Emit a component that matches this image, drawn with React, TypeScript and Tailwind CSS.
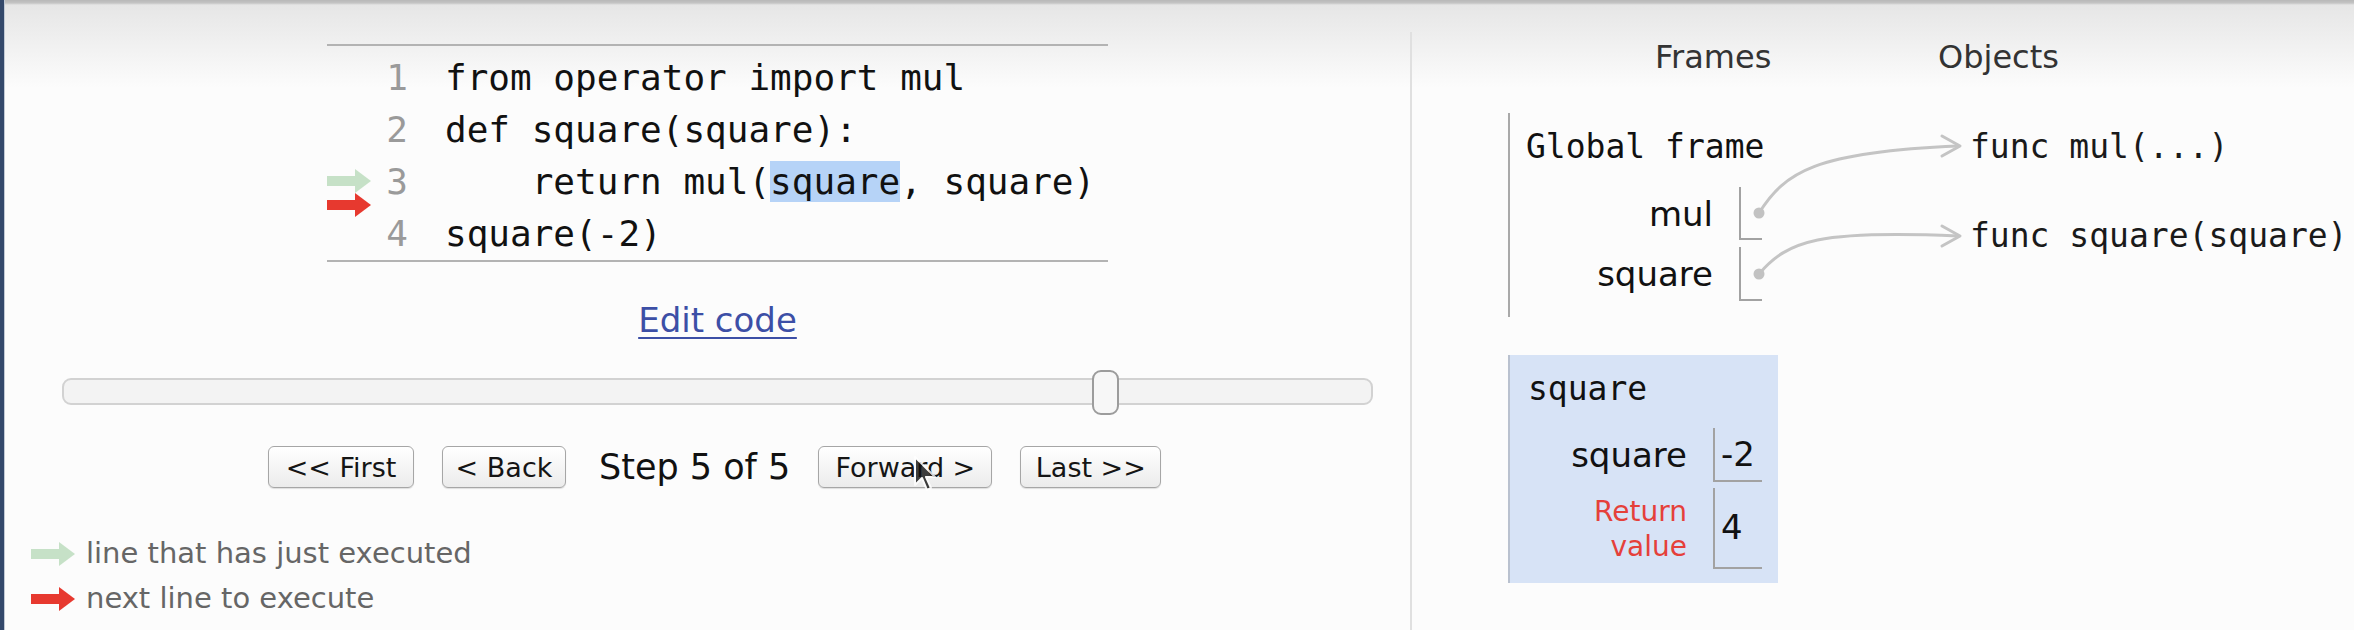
import React from "react";

// Python Tutor style visualizer, step 5 of 5

function Arrow({ color }: { color: string }) {
  return (
    <svg width="44" height="26" viewBox="0 0 44 26" className="block shrink-0">
      <rect x="0" y="8" width="29" height="10" fill={color} />
      <polygon points="28,1 44,13 28,25" fill={color} />
    </svg>
  );
}

const lines = [
  { n: 1, code: <>from operator import mul</> },
  { n: 2, code: <>def square(square):</> },
  {
    n: 3,
    code: (
      <>
        {"    return mul("}
        <span className="bg-[#b6d3f7]">square</span>
        {", square)"}
      </>
    ),
  },
  { n: 4, code: <>square(-2)</> },
];

function Btn({ label, w }: { label: string; w: string }) {
  return (
    <button
      className={`${w} h-[42px] rounded-[6px] border border-[#a6a6a6] bg-[linear-gradient(to_bottom,#ffffff,#ebebeb)] shadow-[0_1px_1px_rgba(0,0,0,0.12)] text-[27px] leading-none text-[#151515] font-['DejaVu_Sans',sans-serif]`}
    >
      {label}
    </button>
  );
}

function Row({ label, h, lw, children }: { label: React.ReactNode; h: string; lw: string; children?: React.ReactNode }) {
  return (
    <div className="flex items-center">
      <div className={`${lw} text-right text-[34px] leading-[40px] text-[#111] font-['DejaVu_Sans',sans-serif]`}>{label}</div>
      <div className={`ml-[26px] ${h} border-l-2 border-b-2 border-[#a2a2a2] flex items-center`}>{children}</div>
    </div>
  );
}

export default function App() {
  return (
    <div className="relative w-[2354px] h-[630px] overflow-hidden flex bg-[linear-gradient(to_bottom,#b8b8b8_0px,#c4c4c4_3px,#e6e6e6_5px,#fcfcfc_88px)]">
      {/* window edge */}
      <div className="w-[5px] shrink-0 bg-[#34496b] border-r border-[#c2cad5]" />

      {/* left: code + controls */}
      <div className="w-[1405px] shrink-0 flex flex-col">
        <div className="ml-[322px] mt-[44px] w-[781px] border-t-2 border-b-2 border-[#b3b3b3] pt-[6px] font-['DejaVu_Sans_Mono',monospace] text-[36px]">
          {lines.map((l) => (
            <div key={l.n} className="flex h-[52px] leading-[52px]">
              <div className="w-[50px] shrink-0 flex flex-col pt-[12px]">
                {l.n === 3 && (
                  <>
                    <Arrow color="#c6e1c7" />
                    <div className="-mt-[2px] shrink-0">
                      <Arrow color="#e7392f" />
                    </div>
                  </>
                )}
              </div>
              <div className="w-[31px] shrink-0 text-right text-[#9a9a9a]">{l.n}</div>
              <div className="ml-[37px] whitespace-pre text-[#111]">{l.code}</div>
            </div>
          ))}
        </div>

        <div className="ml-[322px] w-[781px] mt-[38px] text-center">
          <a href="#" className="text-[34px] leading-[40px] text-[#3c4fa6] underline underline-offset-[5px] decoration-2 font-['DejaVu_Sans',sans-serif]">
            Edit code
          </a>
        </div>

        {/* slider */}
        <div className="relative ml-[57px] mt-[38px] w-[1311px] h-[27px] rounded-[9px] border-2 border-[#d2d2d2] bg-[#f3f3f3]">
          <div className="absolute left-[1028px] top-[-10px] w-[27px] h-[45px] rounded-[9px] border-2 border-[#9c9c9c] bg-[#f7f7f7]" />
        </div>

        <div className="ml-[263px] mt-[41px] flex items-center gap-[28px]">
          <Btn label="<< First" w="w-[146px]" />
          <Btn label="< Back" w="w-[124px]" />
          <span className="ml-[5px] text-[35px] leading-[42px] text-[#111] font-['DejaVu_Sans',sans-serif]">Step 5 of 5</span>
          <Btn label="Forward >" w="w-[174px]" />
          <Btn label="Last >>" w="w-[141px]" />
        </div>

        <div className="ml-[26px] mt-[43px] flex flex-col text-[29px] leading-[45px] text-[#666] font-['DejaVu_Sans',sans-serif]">
          <div className="flex items-center gap-[11px]">
            <Arrow color="#c6e1c7" />
            <span>line that has just executed</span>
          </div>
          <div className="flex items-center gap-[11px]">
            <Arrow color="#e7392f" />
            <span>next line to execute</span>
          </div>
        </div>
      </div>

      {/* right: frames + objects */}
      <div className="flex-1 mt-[32px] border-l-2 border-[#e0e0e0] flex flex-col">
        <div className="flex mt-[5px] text-[32px] leading-[40px] text-[#333] font-['DejaVu_Sans',sans-serif]">
          <span className="ml-[243px] w-[123px]">Frames</span>
          <span className="ml-[160px]">Objects</span>
        </div>

        <div className="flex mt-[36px]">
          <div className="ml-[96px] w-[462px] flex flex-col">
            <div className="border-l-2 border-[#a9a9a9] pl-[16px] pt-[14px] pb-[16px]">
              <div className="h-[40px] leading-[40px] text-[33px] text-[#111] font-['DejaVu_Sans_Mono',monospace]">Global frame</div>
              <div className="mt-[20px] flex flex-col gap-[7px]">
                <Row label="mul" h="h-[53px] w-[23px]" lw="w-[187px]" />
                <Row label="square" h="h-[54px] w-[23px]" lw="w-[187px]" />
              </div>
            </div>

            <div className="mt-[38px] w-[270px] bg-[#d7e3f6] border-l-2 border-[#b9c1cf] pl-[18px] pt-[14px] pb-[14px]">
              <div className="h-[40px] leading-[40px] text-[33px] text-[#111] font-['DejaVu_Sans_Mono',monospace]">square</div>
              <div className="mt-[19px] flex flex-col gap-[6px]">
                <Row label="square" h="h-[54px] w-[49px]" lw="w-[159px]">
                  <span className="pl-[6px] text-[34px] text-[#111] font-['DejaVu_Sans',sans-serif]">-2</span>
                </Row>
                <Row
                  label={
                    <div className="text-[28px] leading-[35px] text-[#e5403a]">
                      Return
                      <br />
                      value
                    </div>
                  }
                  h="h-[81px] w-[49px]"
                  lw="w-[159px]"
                >
                  <span className="pl-[6px] text-[34px] text-[#111] font-['DejaVu_Sans',sans-serif]">4</span>
                </Row>
              </div>
            </div>
          </div>

          <div className="flex flex-col pt-[14px] text-[33px] leading-[40px] text-[#1a1a1a] font-['DejaVu_Sans_Mono',monospace]">
            <div>func mul(...)</div>
            <div className="mt-[49px]">func square(square)</div>
          </div>
        </div>
      </div>

      {/* pointers */}
      <svg className="absolute inset-0 pointer-events-none" width="2354" height="630" viewBox="0 0 2354 630">
        <g fill="none" stroke="#c4c4c4" strokeWidth="3" strokeLinecap="round" strokeLinejoin="round">
          <path d="M1759 213 C1785 172, 1815 152, 1958 146" />
          <path d="M1942 136 L1960 146 L1942 156" />
          <path d="M1759 274 C1788 240, 1820 230, 1958 236" />
          <path d="M1942 226 L1960 236 L1942 246" />
        </g>
        <circle cx="1759" cy="213" r="5.5" fill="#c2c2c2" />
        <circle cx="1759" cy="274" r="5.5" fill="#c2c2c2" />
      </svg>

      {/* mouse cursor */}
      <svg className="absolute left-[913px] top-[455px] pointer-events-none opacity-80" width="24" height="38" viewBox="0 0 24 38">
        <path d="M2 2 L2 30 L9 23 L14 35 L18 33 L13 22 L22 22 Z" fill="#111" stroke="#fff" strokeWidth="2" strokeLinejoin="round" />
      </svg>
    </div>
  );
}
